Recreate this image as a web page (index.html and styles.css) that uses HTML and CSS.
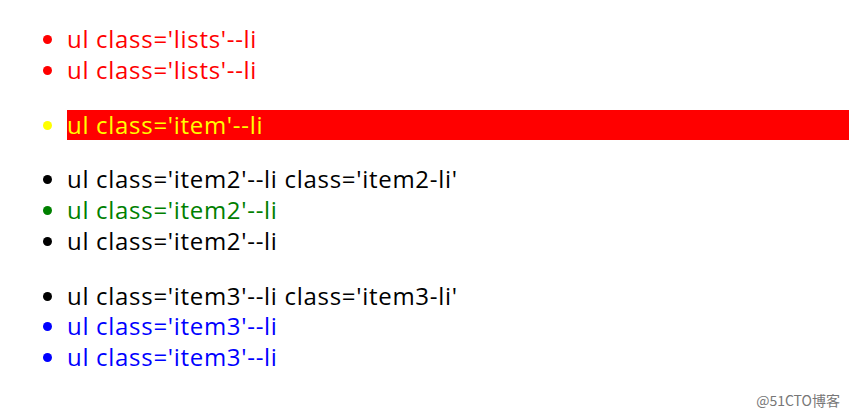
FILE: index.html
```html
<!DOCTYPE html>
<html>
<head>
<meta charset="utf-8">
<link rel="stylesheet" href="styles.css">
</head>
<body>
<ul class="lists">
  <li>ul class='lists'--li</li>
  <li>ul class='lists'--li</li>
</ul>
<ul class="item">
  <li>ul class='item'--li</li>
</ul>
<ul class="item2">
  <li class="item2-li">ul class='item2'--li class='item2-li'</li>
  <li class="green">ul class='item2'--li</li>
  <li>ul class='item2'--li</li>
</ul>
<ul class="item3">
  <li class="item3-li">ul class='item3'--li class='item3-li'</li>
  <li>ul class='item3'--li</li>
  <li>ul class='item3'--li</li>
</ul>
<div class="watermark">@51CTO博客</div>
</body>
</html>
```
FILE: styles.css
```css
html, body {
  margin: 0;
  padding: 0;
  background: #fff;
}
body {
  font-family: "Open Sans", "Noto Sans CJK SC", sans-serif;
  font-size: 24px;
  line-height: 30.75px;
  letter-spacing: 0.7px;
  color: #000;
  position: relative;
  height: 415px;
  overflow: hidden;
}
ul {
  margin: 24px 0;
  padding-left: 67px;
}
.lists li { color: #f00; }
.item li { color: #ff0; background: #f00; }
.item2 li { color: #000; }
.item2 li.green { color: #008000; }
.item3 li { color: #00f; }
.item3 li.item3-li { color: #000; }
.watermark {
  position: absolute;
  right: 9px;
  bottom: 6px;
  font-family: "Noto Sans CJK SC", sans-serif;
  font-size: 14px;
  line-height: 18px;
  letter-spacing: 0;
  color: #777;
}
```
